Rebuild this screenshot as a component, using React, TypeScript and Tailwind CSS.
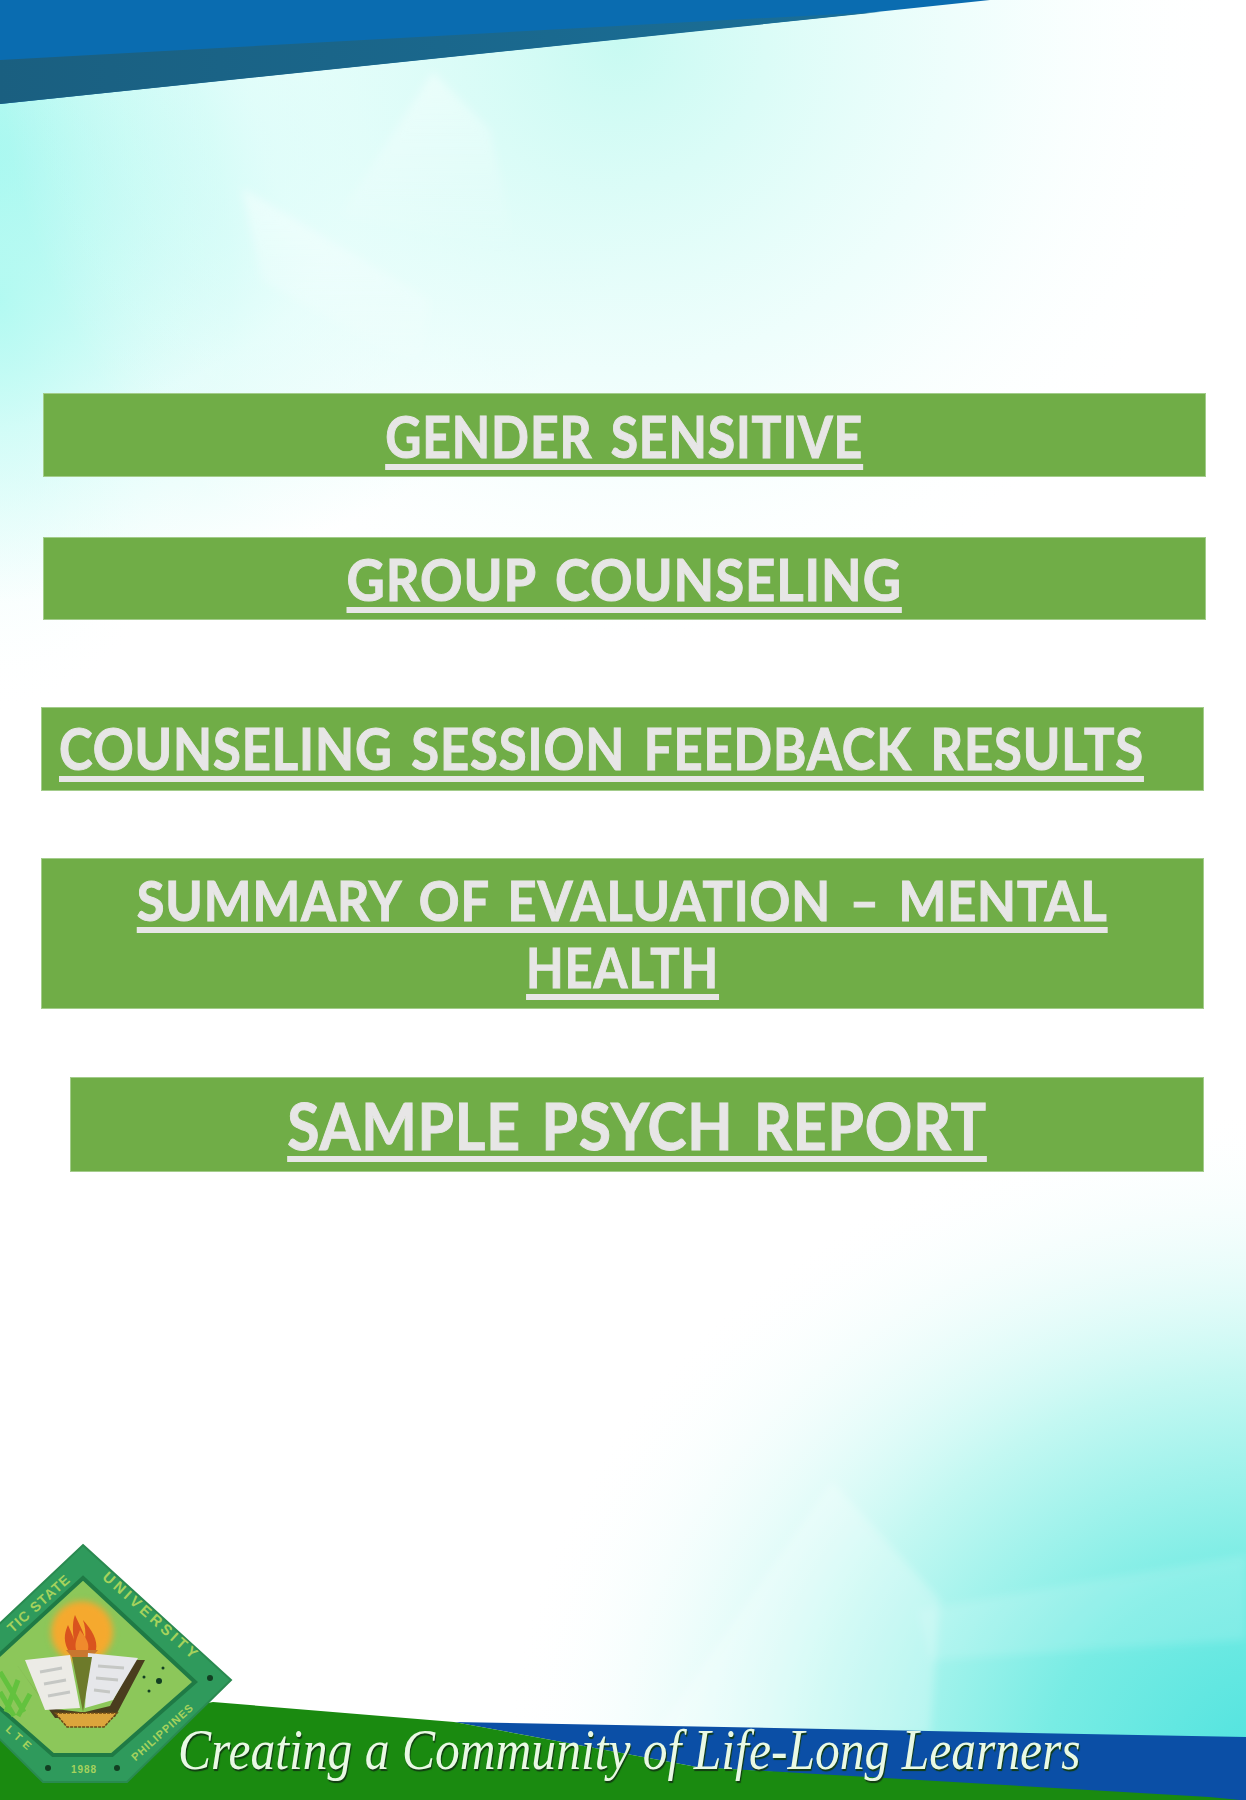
const bars = [
  {
    lines: [{ t: "GENDER SENSITIVE", c: "text-[57px] leading-[84px] scale-x-[0.875]" }],
    box: "mt-0 ml-[43px] w-[1163px] h-[84px] items-center",
  },
  {
    lines: [{ t: "GROUP COUNSELING", c: "text-[57px] leading-[83px] scale-x-[0.925]" }],
    box: "mt-[60px] ml-[43px] w-[1163px] h-[83px] items-center",
  },
  {
    lines: [{ t: "COUNSELING SESSION FEEDBACK RESULTS", c: "text-[57px] leading-[80px] scale-x-[0.89] origin-left" }],
    box: "mt-[87px] ml-[41px] w-[1163px] h-[84px] items-start pl-[17px]",
  },
  {
    lines: [
      { t: "SUMMARY OF EVALUATION – MENTAL", c: "text-[56px] leading-[67px] scale-x-[0.902]" },
      { t: "HEALTH", c: "text-[56px] leading-[67px] scale-x-[0.873]" },
    ],
    box: "mt-[67px] ml-[41px] w-[1163px] h-[151px] items-center pt-[7px]",
  },
  {
    lines: [{ t: "SAMPLE PSYCH REPORT", c: "text-[65px] leading-[95px] scale-x-[0.904]" }],
    box: "mt-[68px] ml-[70px] w-[1134px] h-[95px] items-center",
  },
];

function Background() {
  return (
    <svg className="absolute inset-0" width="1246" height="1800" viewBox="0 0 1246 1800">
      <defs>
        <radialGradient id="tl" gradientUnits="userSpaceOnUse" cx="-60" cy="170" r="700" gradientTransform="translate(-60 170) scale(1 0.62) translate(60 -170)">
          <stop offset="0" stopColor="#66f2e6" />
          <stop offset="0.25" stopColor="#9af7ec" />
          <stop offset="0.6" stopColor="#dcfdf9" />
          <stop offset="1" stopColor="#ffffff" />
        </radialGradient>
        <radialGradient id="tl2" gradientUnits="userSpaceOnUse" cx="0" cy="300" r="420" gradientTransform="translate(0 300) scale(0.55 1) translate(0 -300)">
          <stop offset="0" stopColor="#b4faf2" stopOpacity="0.9" />
          <stop offset="1" stopColor="#ffffff" stopOpacity="0" />
        </radialGradient>
        <radialGradient id="tr" gradientUnits="userSpaceOnUse" cx="620" cy="40" r="620">
          <stop offset="0" stopColor="#c8faf2" />
          <stop offset="0.6" stopColor="#ecfefc" stopOpacity="0.7" />
          <stop offset="1" stopColor="#ffffff" stopOpacity="0" />
        </radialGradient>
        <radialGradient id="br" gradientUnits="userSpaceOnUse" cx="1280" cy="1770" r="780" gradientTransform="translate(1280 1770) scale(1 0.85) translate(-1280 -1770)">
          <stop offset="0" stopColor="#4ce2de" />
          <stop offset="0.3" stopColor="#78ece4" />
          <stop offset="0.6" stopColor="#c4f8f2" />
          <stop offset="1" stopColor="#ffffff" stopOpacity="0" />
        </radialGradient>
        <linearGradient id="tri" x1="0" y1="0" x2="0" y2="1">
          <stop offset="0" stopColor="#ffffff" stopOpacity="0.4" />
          <stop offset="1" stopColor="#ffffff" stopOpacity="0" />
        </linearGradient>
        <linearGradient id="blueDark" x1="0" y1="0" x2="1" y2="0">
          <stop offset="0" stopColor="#1a5f80" />
          <stop offset="1" stopColor="#1a6f98" />
        </linearGradient>
        <filter id="soft"><feGaussianBlur stdDeviation="4" /></filter>
      </defs>
      <rect width="1246" height="1800" fill="#ffffff" />
      <rect width="1246" height="700" fill="url(#tl)" />
      <rect width="1246" height="800" fill="url(#tl2)" />
      <rect width="1246" height="700" fill="url(#tr)" />
      <rect y="1000" width="1246" height="800" fill="url(#br)" />
      <g filter="url(#soft)">
        <polygon points="433,72 490,130 515,250 340,215" fill="url(#tri)" />
        <polygon points="242,188 430,300 420,370 262,280" fill="url(#tri)" />
        <polygon points="832,1481 940,1600 930,1735 654,1735" fill="#ffffff" fillOpacity="0.25" />
        <polygon points="918,1610 1246,1555 1246,1640 930,1660" fill="#ffffff" fillOpacity="0.14" />
      </g>

      <polygon points="0,0 990,0 0,104" fill="#0a6cb0" />
      <polygon points="0,60 690,22 880,12 0,104" fill="url(#blueDark)" />

      <polygon points="454,1722 1246,1737 1246,1800 1200,1800 697,1767" fill="#0b4fa6" />
      <polygon points="213,1702 454,1722 697,1767 1209,1797 1240,1800 0,1800 0,1740" fill="#1a8a10" />
    </svg>
  );
}

function Logo() {
  return (
    <svg className="absolute left-0 top-[1530px]" width="240" height="270" viewBox="0 1530 240 270">
      <polygon points="83,1545 231,1680 127,1782 43,1782 -60,1680" fill="#2f9a5c" stroke="#2a8a50" strokeWidth="2" />
      <polygon points="83,1578 195,1682 112,1755 53,1755 -30,1682" fill="#8cc75a" stroke="#1f7a45" strokeWidth="4" />
      <circle cx="82" cy="1632" r="31" fill="#f5a92e" filter="blur(3px)" />
      <path d="M68,1650 C62,1638 66,1630 68,1625 C71,1632 73,1636 74,1640 C72,1628 73,1620 75,1615 C80,1626 84,1632 85,1640 C86,1632 85,1626 83,1620 C92,1630 98,1640 96,1650 Z" fill="#d9531e" />
      <path d="M76,1650 C74,1642 78,1636 80,1630 C84,1636 90,1642 88,1650 Z" fill="#f08a2c" />
      <polygon points="66,1650 98,1650 92,1657 72,1657" fill="#c9772f" />
      <polygon points="17,1665 55,1718 115,1717 145,1660 135,1660 110,1706 85,1712 80,1712 48,1708" fill="#4a3d1e" />
      <polygon points="25,1660 70,1655 80,1708 45,1710" fill="#ecebe6" />
      <polygon points="88,1653 138,1658 113,1700 85,1708" fill="#e6e7ea" />
      <path d="M40,1672 L62,1668 M44,1684 L66,1680 M48,1696 L70,1692 M98,1666 L124,1668 M96,1678 L118,1680 M94,1690 L110,1692" stroke="#c5c7c4" strokeWidth="3" fill="none" />
      <polygon points="72,1657 92,1657 83,1712" fill="#6d7a2a" />
      <polygon points="55,1713 117,1713 104,1727 67,1727" fill="#dca53c" stroke="#6b4a16" strokeWidth="1.5" strokeDasharray="3 1" />
      <g fill="#123f22">
        <circle cx="210" cy="1678" r="3" />
        <circle cx="159" cy="1681" r="3" />
        <circle cx="144" cy="1677" r="1.5" />
        <circle cx="163" cy="1668" r="1.5" />
        <circle cx="149" cy="1691" r="1.5" />
        <circle cx="48" cy="1768" r="3" />
        <circle cx="117" cy="1768" r="3" />
      </g>
      <path d="M0,1672 L24,1712 M0,1692 L14,1716 M18,1680 L6,1712 M30,1694 L18,1716" stroke="#63c23e" strokeWidth="5" fill="none" />
      <g fill="#a6d25c" fontFamily="'Liberation Sans', sans-serif" fontWeight="700" fontSize="14" textAnchor="middle">
        <text transform="translate(148 1620) rotate(42)" fontSize="15" letterSpacing="3.5">UNIVERSITY</text>
        <text transform="translate(42 1607) rotate(-42)" letterSpacing="1">TIC STATE</text>
        <text transform="translate(165 1735) rotate(-42)" fontSize="11" letterSpacing="1">PHILIPPINES</text>
        <text transform="translate(18 1742) rotate(42)" fontSize="11" letterSpacing="5">LTE</text>
        <text x="84" y="1773" fontSize="10" letterSpacing="1">1988</text>
      </g>
    </svg>
  );
}

export default function App() {
  return (
    <div className="relative w-[1246px] h-[1800px] overflow-hidden bg-white font-['Lato',sans-serif]">
      <Background />
      <Logo />

      <div className="relative pt-[393px]">
        {bars.map((b, i) => (
          <div key={i} className={`flex flex-col bg-[#70ad47] border border-[#a3cc8b] ${b.box}`}>
            {b.lines.map((line) => (
              <span
                key={line.t}
                className={`block font-bold whitespace-nowrap tracking-[1px] [word-spacing:6px] text-[#e7e6e6] [-webkit-text-stroke:1px_#e7e6e6] underline decoration-[6px] underline-offset-[6px] ${line.c}`}
              >
                {line.t}
              </span>
            ))}
          </div>
        ))}
      </div>

      <div className="absolute left-[178px] top-[1718px] scale-x-[0.885] origin-left font-['Liberation_Serif',serif] italic text-[56px] leading-[64px] whitespace-nowrap text-[#e9f9e4] [text-shadow:1px_2px_1px_#123c12]">
        Creating a Community of Life-Long Learners
      </div>
    </div>
  );
}
